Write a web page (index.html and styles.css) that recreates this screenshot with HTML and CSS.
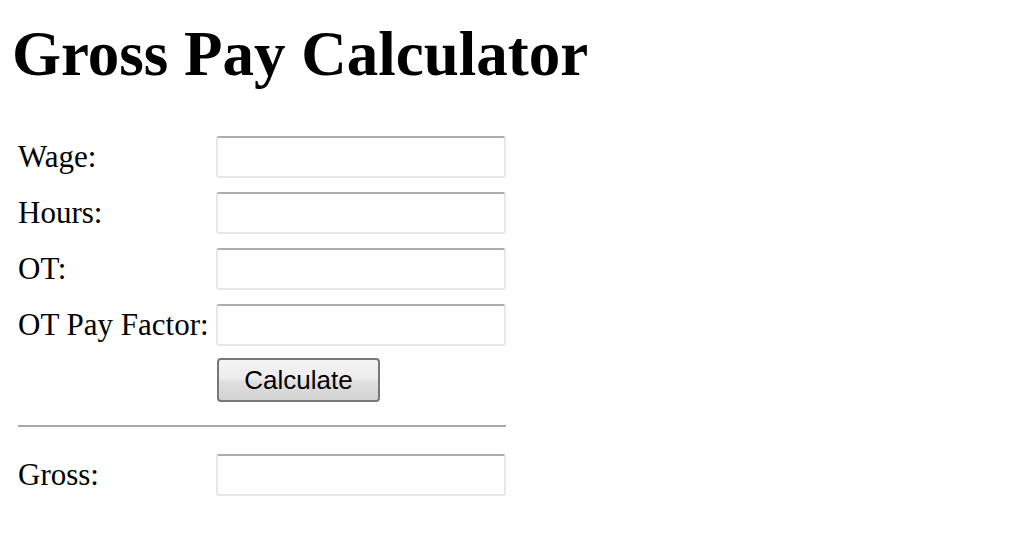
FILE: index.html
```html
<!DOCTYPE html>
<html>
<head>
<meta charset="utf-8">
<title>Gross Pay Calculator</title>
<link rel="stylesheet" href="styles.css">
</head>
<body>
<h1 class="title">Gross Pay Calculator</h1>
<form class="calc">
  <div class="fields">
    <label class="lbl" for="wage">Wage:</label>
    <input class="box" id="wage" type="text">
    <label class="lbl" for="hours">Hours:</label>
    <input class="box" id="hours" type="text">
    <label class="lbl" for="ot">OT:</label>
    <input class="box" id="ot" type="text">
    <label class="lbl" for="factor">OT Pay Factor:</label>
    <input class="box" id="factor" type="text">
    <span class="lbl"></span>
    <button class="btn" type="button">Calculate</button>
  </div>
  <hr class="rule">
  <div class="fields">
    <label class="lbl" for="gross">Gross:</label>
    <input class="box" id="gross" type="text">
  </div>
</form>
</body>
</html>
```

FILE: styles.css
```css
html, body {
  margin: 0;
  padding: 0;
  background: #ffffff;
}
body {
  font-family: "Liberation Serif", "Times New Roman", serif;
  color: #000;
}
.title {
  margin: 19px 0 0 12px;
  font-size: 63px;
  line-height: 71px;
  font-weight: bold;
}
.calc {
  margin: 46px 0 0 18px;
  width: 488px;
  display: flex;
  flex-direction: column;
}
.fields {
  display: grid;
  grid-template-columns: 198px 290px;
  row-gap: 14px;
  align-items: center;
}
.lbl {
  font-size: 31px;
  line-height: 42px;
  height: 42px;
  white-space: nowrap;
}
.box {
  box-sizing: border-box;
  width: 290px;
  height: 42px;
  margin: 0;
  padding: 0 6px;
  border: 2px solid #e3e7ee;
  border-top-color: #abadb3;
  border-radius: 3px;
  background: #fff;
  font-size: 24px;
  font-family: "Liberation Sans", Arial, sans-serif;
  outline: none;
}
.btn {
  justify-self: start;
  box-sizing: border-box;
  width: 163px;
  height: 44px;
  margin: -2px 0 0 1px;
  padding: 0;
  border: 2px solid #777777;
  border-radius: 4px;
  background: linear-gradient(#f4f4f4 0%, #ececec 48%, #e0e0e0 52%, #d2d2d2 100%);
  font-family: "Liberation Sans", Arial, sans-serif;
  font-size: 26px;
  color: #000;
}
.rule {
  box-sizing: border-box;
  width: 488px;
  height: 2px;
  margin: 23px 0 27px 0;
  border: none;
  background: #a8a8a8;
}
```
